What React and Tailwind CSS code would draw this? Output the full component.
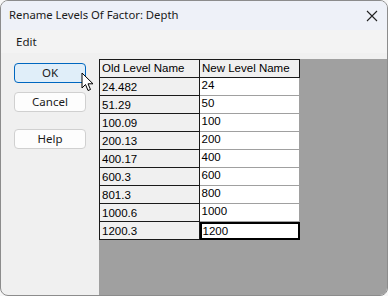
const rows = [
  ['24.482', '24'],
  ['51.29', '50'],
  ['100.09', '100'],
  ['200.13', '200'],
  ['400.17', '400'],
  ['600.3', '600'],
  ['801.3', '800'],
  ['1000.6', '1000'],
  ['1200.3', '1200'],
];

function Cursor() {
  return (
    <svg className="absolute left-[67px] top-[13px]" width="14" height="21" viewBox="0 0 14 21">
      <path
        d="M1 1 L1 16 L4.5 12.5 L7 18.5 L9.5 17.5 L7 11.8 L12 11.8 Z"
        fill="#fff"
        stroke="#000"
        strokeWidth="1"
        strokeLinejoin="round"
      />
    </svg>
  );
}

export default function App() {
  return (
    <div className="w-[388px] h-[296px] bg-[#f7f7f7] font-['Noto_Sans',sans-serif]">
      <div className="w-full h-full flex flex-col border border-[#8c8c8c] rounded-[8px] overflow-hidden bg-[#f0f0f0]">
        <div className="h-[29px] shrink-0 bg-[#eef1f8] flex items-center justify-between pl-[8px] pr-[9px]">
          <span className="text-[11.3px] text-[#1a1a1a]">Rename Levels Of Factor: Depth</span>
          <svg width="12" height="12" viewBox="0 0 12 12">
            <path d="M1 1 L11 11 M11 1 L1 11" stroke="#222" strokeWidth="1.1" />
          </svg>
        </div>
        <div className="h-[23px] shrink-0 bg-[#f3f3f3] flex items-center pl-[15px]">
          <span className="text-[11.5px] text-[#1a1a1a]">Edit</span>
        </div>
        <div className="flex flex-1 pt-[6px]">
          <div className="w-[98px] shrink-0 pl-[13px] flex flex-col">
            <div className="relative">
              <button className="w-[72px] h-[20px] rounded-[4px] border border-[#0067c0] bg-[#e0eef9] text-[11.5px] text-[#1a1a1a] leading-none">
                OK
              </button>
              <Cursor />
            </div>
            <button className="mt-[9px] w-[72px] h-[20px] rounded-[4px] border border-[#d0d0d0] bg-[#fdfdfd] text-[11.5px] text-[#1a1a1a] leading-none">
              Cancel
            </button>
            <button className="mt-[17px] w-[72px] h-[20px] rounded-[4px] border border-[#d0d0d0] bg-[#fdfdfd] text-[11.5px] text-[#1a1a1a] leading-none">
              Help
            </button>
          </div>
          <div className="flex-1 bg-[#a0a0a0] font-['Liberation_Sans',sans-serif] text-[11.5px] text-black">
            <div className="flex border-t border-l border-[#1a1a1a] w-[201px]">
              <div className="w-[100px] h-[18px] bg-[#f0f0f0] border-r border-b border-[#1a1a1a] pl-[2px] leading-[17px] whitespace-nowrap">
                Old Level Name
              </div>
              <div className="w-[100px] h-[18px] bg-[#f0f0f0] border-r border-b border-[#1a1a1a] pl-[2px] leading-[17px] whitespace-nowrap">
                New Level Name
              </div>
            </div>
            {rows.map((r, i) => (
              <div key={i} className="flex border-l border-[#1a1a1a] w-[201px]">
                <div className="w-[100px] h-[18px] bg-[#f0f0f0] border-r border-b border-[#1a1a1a] pl-[2px] leading-[19px]">
                  {r[0]}
                </div>
                {i === rows.length - 1 ? (
                  <div className="w-[101px] h-[18px] bg-white border-2 border-black pl-[1px] leading-[15px]">
                    {r[1]}
                  </div>
                ) : (
                  <div className="w-[101px] h-[18px] bg-white border-r border-b border-[#a0a0a0] pl-[2px] leading-[15px]">
                    {r[1]}
                  </div>
                )}
              </div>
            ))}
          </div>
        </div>
      </div>
    </div>
  );
}
